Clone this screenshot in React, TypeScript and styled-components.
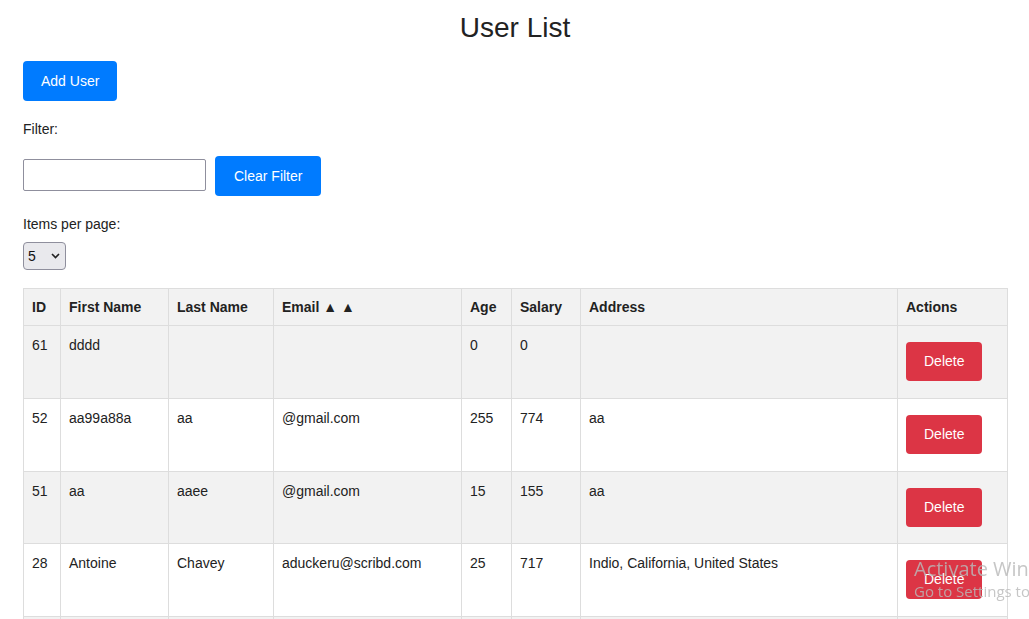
import React, { useState } from "react";
import styled, { createGlobalStyle } from "styled-components";

const GlobalStyle = createGlobalStyle`
  html, body {
    margin: 0;
    padding: 0;
    background: #fff;
    overflow: hidden;
  }
  body {
    font-family: "Liberation Sans", Arial, sans-serif;
    font-size: 14px;
    color: #222;
  }
`;

interface User {
  id: number;
  firstName: string;
  lastName: string;
  email: string;
  age: number;
  salary: number;
  address: string;
}

const USERS: User[] = [
  { id: 61, firstName: "dddd", lastName: "", email: "", age: 0, salary: 0, address: "" },
  { id: 52, firstName: "aa99a88a", lastName: "aa", email: "@gmail.com", age: 255, salary: 774, address: "aa" },
  { id: 51, firstName: "aa", lastName: "aaee", email: "@gmail.com", age: 15, salary: 155, address: "aa" },
  {
    id: 28,
    firstName: "Antoine",
    lastName: "Chavey",
    email: "aduckeru@scribd.com",
    age: 25,
    salary: 717,
    address: "Indio, California, United States",
  },
  { id: 27, firstName: "Bettina", lastName: "Gorrie", email: "bgorrie@home.pl", age: 41, salary: 532, address: "Reno, Nevada, United States" },
];

const COLUMNS = [
  { label: "ID", width: 37 },
  { label: "First Name", width: 108 },
  { label: "Last Name", width: 105 },
  { label: "Email \u25B2 \u25B2", width: 188 },
  { label: "Age", width: 50 },
  { label: "Salary", width: 69 },
  { label: "Address", width: 317 },
  { label: "Actions", width: 110 },
];

const Page = styled.div`
  display: flex;
  flex-direction: column;
  align-items: flex-start;
  padding: 0 22px 0 23px;
`;

const Title = styled.h1`
  align-self: stretch;
  margin: 12px 0 17px;
  font-size: 28px;
  line-height: 32px;
  font-weight: 400;
  text-align: center;
  color: #222;
`;

const Button = styled.button<{ $variant?: "primary" | "danger" }>`
  font-family: inherit;
  font-size: 14px;
  line-height: 16px;
  padding: 12px 18px;
  border: none;
  border-radius: 4px;
  color: #fff;
  background: ${(p) => (p.$variant === "danger" ? "#dc3545" : "#007bff")};
  cursor: pointer;
`;

const ClearButton = styled(Button)`
  padding: 12px 19px;
`;

const DeleteButton = styled(Button)`
  margin: 5px 0;
  padding: 11px 18px 12px;
`;

const Label = styled.label`
  display: block;
  line-height: 16px;
  margin-top: 20px;
`;

const FilterRow = styled.div`
  display: flex;
  align-items: flex-start;
  gap: 9px;
  margin-top: 19px;
`;

const TextInput = styled.input`
  width: 183px;
  height: 32px;
  margin-top: 3px;
  box-sizing: border-box;
  border: 1px solid #8f8f9d;
  border-radius: 2px;
  font-family: inherit;
  font-size: 14px;
  padding: 0 6px;
`;

const SelectWrap = styled.div`
  position: relative;
  margin-top: 10px;
  width: 43px;
  height: 28px;
`;

const Select = styled.select`
  appearance: none;
  width: 43px;
  height: 28px;
  box-sizing: border-box;
  border: 1px solid #8f8f9d;
  border-radius: 4px;
  background: #e9e9ed;
  font-family: inherit;
  font-size: 14px;
  color: #111;
  padding: 0 0 0 4px;
`;

const Chevron = styled.svg`
  position: absolute;
  right: 6px;
  top: 11px;
  pointer-events: none;
`;

const Table = styled.table`
  margin-top: 18px;
  width: 984px;
  table-layout: fixed;
  border-collapse: collapse;
`;

const Th = styled.th`
  text-align: left;
  font-weight: 700;
  padding: 10px 8px;
  line-height: 16px;
  background: #f2f2f2;
  border: 1px solid #ddd;
`;

const Row = styled.tr<{ $shaded: boolean }>`
  background: ${(p) => (p.$shaded ? "#f2f2f2" : "#fff")};
`;

const Td = styled.td`
  vertical-align: top;
  padding: 11px 8px 11.75px;
  line-height: 16px;
  border: 1px solid #ddd;
  word-wrap: break-word;
`;

const Watermark = styled.div`
  position: fixed;
  left: 914px;
  top: 557px;
  white-space: nowrap;
  color: rgba(185, 185, 185, 0.82);
  font-family: "Open Sans", "Noto Sans", sans-serif;
  pointer-events: none;
`;

const WatermarkTitle = styled.div`
  font-size: 20px;
  line-height: 24px;
`;

const WatermarkSub = styled.div`
  font-size: 15px;
  line-height: 20px;
`;

export default function App() {
  const [filter, setFilter] = useState("");
  const [perPage, setPerPage] = useState("5");
  const [users, setUsers] = useState(USERS);

  return (
    <>
      <GlobalStyle />
      <Page>
        <Title>User List</Title>
        <Button>Add User</Button>
        <Label>Filter:</Label>
        <FilterRow>
          <TextInput value={filter} onChange={(e) => setFilter(e.target.value)} />
          <ClearButton onClick={() => setFilter("")}>Clear Filter</ClearButton>
        </FilterRow>
        <Label>Items per page:</Label>
        <SelectWrap>
          <Select value={perPage} onChange={(e) => setPerPage(e.target.value)}>
            <option value="5">5</option>
            <option value="10">10</option>
            <option value="20">20</option>
          </Select>
          <Chevron width="9" height="6" viewBox="0 0 9 6">
            <path d="M1 1l3.5 3.5L8 1" fill="none" stroke="#222" strokeWidth="1.6" />
          </Chevron>
        </SelectWrap>
        <Table>
          <colgroup>
            {COLUMNS.map((c) => (
              <col key={c.label} style={{ width: c.width }} />
            ))}
          </colgroup>
          <thead>
            <tr>
              {COLUMNS.map((c) => (
                <Th key={c.label}>{c.label}</Th>
              ))}
            </tr>
          </thead>
          <tbody>
            {users.map((u, i) => (
              <Row key={u.id} $shaded={i % 2 === 0}>
                <Td>{u.id}</Td>
                <Td>{u.firstName}</Td>
                <Td>{u.lastName}</Td>
                <Td>{u.email}</Td>
                <Td>{u.age}</Td>
                <Td>{u.salary}</Td>
                <Td>{u.address}</Td>
                <Td>
                  <DeleteButton
                    $variant="danger"
                    onClick={() => setUsers(users.filter((x) => x.id !== u.id))}
                  >
                    Delete
                  </DeleteButton>
                </Td>
              </Row>
            ))}
          </tbody>
        </Table>
      </Page>
      <Watermark>
        <WatermarkTitle>Activate Windows</WatermarkTitle>
        <WatermarkSub>Go to Settings to activate Windows.</WatermarkSub>
      </Watermark>
    </>
  );
}
